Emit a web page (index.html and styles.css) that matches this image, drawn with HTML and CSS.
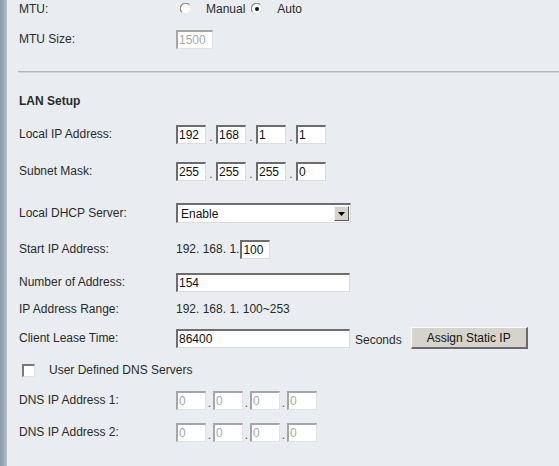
FILE: index.html
```html
<!DOCTYPE html>
<html>
<head>
<meta charset="utf-8">
<link rel="stylesheet" href="styles.css">
</head>
<body>
<div class="page">
  <div class="strip"></div>
  <div class="main">
    <div class="row first">
      <div class="label">MTU:</div>
      <div class="field">
        <svg class="radio r1" width="12" height="12" viewBox="0 0 12 12"><circle cx="6" cy="6" r="5" fill="#fff"/><path d="M1.8 9.2 A5 5 0 0 1 9.2 1.8" fill="none" stroke="#8a8a8a" stroke-width="1.2"/><path d="M9.2 1.8 A5 5 0 0 1 1.8 9.2" fill="none" stroke="#e4e4e4" stroke-width="1"/></svg>
        <span class="radio-text t1">Manual</span>
        <svg class="radio r2" width="12" height="12" viewBox="0 0 12 12"><circle cx="6" cy="6" r="5" fill="#fff"/><path d="M1.8 9.2 A5 5 0 0 1 9.2 1.8" fill="none" stroke="#8a8a8a" stroke-width="1.2"/><path d="M9.2 1.8 A5 5 0 0 1 1.8 9.2" fill="none" stroke="#e4e4e4" stroke-width="1"/><circle cx="6" cy="6" r="2" fill="#111"/></svg>
        <span class="radio-text t2">Auto</span>
      </div>
    </div>
    <div class="row mt11">
      <div class="label">MTU Size:</div>
      <div class="field"><input class="box w37 disabled" value="1500" disabled></div>
    </div>
    <div class="divider"></div>
    <div class="row mt18">
      <div class="label bold">LAN Setup</div>
    </div>
    <div class="row mt13">
      <div class="label">Local IP Address:</div>
      <div class="field">
        <input class="box oct" value="192"><span class="dot wide">.</span><input class="box oct" value="168"><span class="dot wide">.</span><input class="box oct" value="1"><span class="dot wide">.</span><input class="box oct" value="1">
      </div>
    </div>
    <div class="row mt17">
      <div class="label">Subnet Mask:</div>
      <div class="field">
        <input class="box oct" value="255"><span class="dot wide">.</span><input class="box oct" value="255"><span class="dot wide">.</span><input class="box oct" value="255"><span class="dot wide">.</span><input class="box oct" value="0">
      </div>
    </div>
    <div class="row mt22">
      <div class="label">Local DHCP Server:</div>
      <div class="field">
        <div class="select"><span class="select-text">Enable</span><span class="select-btn"><svg width="7" height="4" viewBox="0 0 7 4"><path d="M0 0 H7 L3.5 4 Z" fill="#000"/></svg></span></div>
      </div>
    </div>
    <div class="row mt16">
      <div class="label">Start IP Address:</div>
      <div class="field"><span class="prefix">192. 168. 1.</span><input class="box oct" value="100"></div>
    </div>
    <div class="row mt13">
      <div class="label">Number of Address:</div>
      <div class="field"><input class="box long" value="154"></div>
    </div>
    <div class="row mt7">
      <div class="label">IP Address Range:</div>
      <div class="field">192. 168. 1. 100~253</div>
    </div>
    <div class="row mt8 tall">
      <div class="label">Client Lease Time:</div>
      <div class="field">
        <input class="box long" value="86400"><span class="unit">Seconds</span><button class="btn">Assign Static IP</button>
      </div>
    </div>
    <div class="row mt11">
      <span class="checkbox"></span><span class="check-text">User Defined DNS Servers</span>
    </div>
    <div class="row mt10">
      <div class="label">DNS IP Address 1:</div>
      <div class="field">
        <input class="box oct disabled" value="0" disabled><span class="dot">.</span><input class="box oct disabled" value="0" disabled><span class="dot">.</span><input class="box oct disabled" value="0" disabled><span class="dot">.</span><input class="box oct disabled" value="0" disabled>
      </div>
    </div>
    <div class="row mt12">
      <div class="label">DNS IP Address 2:</div>
      <div class="field">
        <input class="box oct disabled" value="0" disabled><span class="dot">.</span><input class="box oct disabled" value="0" disabled><span class="dot">.</span><input class="box oct disabled" value="0" disabled><span class="dot">.</span><input class="box oct disabled" value="0" disabled>
      </div>
    </div>
  </div>
</div>
</body>
</html>
```
FILE: styles.css
```css
* { box-sizing: border-box; }
html, body {
  margin: 0;
  padding: 0;
  width: 559px;
  height: 466px;
  overflow: hidden;
  background: #e9edf1;
  font-family: "Liberation Sans", Arial, sans-serif;
  font-size: 12px;
  color: #2a2a2a;
}
.page {
  display: flex;
  width: 559px;
  height: 466px;
}
.strip {
  width: 7px;
  flex: none;
  background: linear-gradient(to right, #8a99ab, #a4b1bf 70%, #b9c3ce);
}
.main {
  flex: 1;
  padding-left: 12px;
  display: flex;
  flex-direction: column;
}
.row {
  display: flex;
  align-items: center;
  height: 20px;
  flex: none;
}
.row.first { height: 18px; }
.row.tall { height: 22px; }
.mt7 { margin-top: 7px; }
.mt8 { margin-top: 8px; }
.mt10 { margin-top: 10px; }
.mt11 { margin-top: 11px; }
.mt12 { margin-top: 12px; }
.mt13 { margin-top: 13px; }
.mt16 { margin-top: 16px; }
.mt17 { margin-top: 17px; }
.mt18 { margin-top: 18px; }
.mt22 { margin-top: 22px; }
.label {
  width: 157px;
  flex: none;
}
.bold { font-weight: bold; }
.field {
  display: flex;
  align-items: center;
}
.radio { display: block; flex: none; }
.r1 { margin-left: 4px; }
.t1 { margin-left: 14px; }
.r2 { margin-left: 6px; }
.t2 { margin-left: 14px; }
.divider {
  margin-top: 22px;
  margin-left: -1px;
  height: 2px;
  border-top: 1px solid #aeb6be;
  border-bottom: 1px solid #cfd5db;
  flex: none;
}
.box {
  height: 19px;
  margin: 0;
  padding: 0 0 0 1px;
  font-family: "Liberation Sans", Arial, sans-serif;
  font-size: 12px;
  color: #111;
  background: #fff;
  border-style: solid;
  border-width: 2px 1px 1px 2px;
  border-color: #6d6d6d #dcdcdc #dcdcdc #6d6d6d;
  outline: none;
}
.box.disabled {
  color: #a8a8a8;
  border-color: #a6a6a6 #e2e2e2 #e2e2e2 #a6a6a6;
  background: #fff;
}
.oct { width: 30px; }
.w37 { width: 37px; }
.long { width: 174px; }
.dot {
  width: 7px;
  text-align: center;
  color: #555;
  padding-top: 6px;
}
.dot.wide { width: 10px; }
.select {
  width: 175px;
  height: 20px;
  display: flex;
  align-items: center;
  justify-content: space-between;
  background: #fff;
  border-style: solid;
  border-width: 2px 1px 1px 2px;
  border-color: #6d6d6d #dcdcdc #dcdcdc #6d6d6d;
  padding: 0 1px 0 3px;
}
.select-text { color: #111; }
.select-btn {
  width: 15px;
  height: 15px;
  display: flex;
  align-items: center;
  justify-content: center;
  background: #d6d3cd;
  border-style: solid;
  border-width: 1px;
  border-color: #f4f4f4 #5a5a5a #5a5a5a #f4f4f4;
}
.select-btn svg { display: block; }
.prefix { margin-right: 1px; }
.unit { margin-left: 5px; margin-top: 4px; }
.btn {
  margin-left: 9px;
  width: 117px;
  height: 22px;
  padding: 0;
  font-family: "Liberation Sans", Arial, sans-serif;
  font-size: 12px;
  color: #111;
  background: #d6d3cd;
  border-style: solid;
  border-width: 1px 2px 2px 1px;
  border-color: #fafafa #6a6a6a #6a6a6a #fafafa;
}
.checkbox {
  width: 13px;
  height: 13px;
  margin-left: 3px;
  background: #fff;
  border-style: solid;
  border-width: 2px 1px 1px 2px;
  border-color: #7a7a7a #e2e2e2 #e2e2e2 #7a7a7a;
  flex: none;
}
.check-text { margin-left: 14px; }
```
